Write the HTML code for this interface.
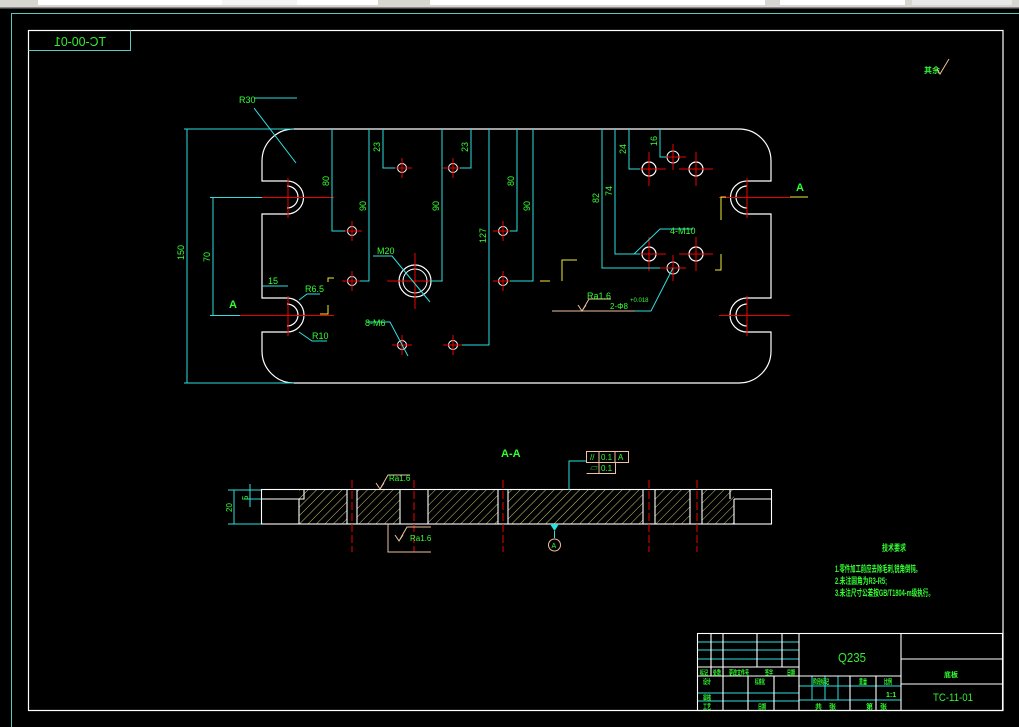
<!DOCTYPE html>
<html><head><meta charset="utf-8"><style>
html,body{margin:0;padding:0;background:#000;width:1019px;height:727px;overflow:hidden}
svg{display:block}
text{font-family:"Liberation Sans","Noto Sans CJK SC",sans-serif}
</style></head><body>
<svg width="1019" height="727" viewBox="0 0 1019 727" xmlns="http://www.w3.org/2000/svg">
<defs>
<pattern id="h" width="6" height="6" patternUnits="userSpaceOnUse" patternTransform="rotate(45)">
<line x1="0" y1="0" x2="0" y2="6" stroke="#e0e080" stroke-width="0.9"/>
</pattern>
<g id="sh"><circle r="4.5" fill="none" stroke="#fff" stroke-width="1"/><path d="M-10 0H10M0-10V10" stroke="#e00" stroke-width="1"/></g>
<g id="bh"><circle r="7" fill="none" stroke="#fff" stroke-width="1.2"/><path d="M-17 0H17M0-17V17" stroke="#e00" stroke-width="1"/></g>
</defs>
<rect x="0" y="0" width="1019" height="727" fill="#000"/>
<!-- toolbar -->
<rect x="0" y="0" width="1019" height="7" fill="#d8d6d0"/>
<rect x="38" y="0" width="340" height="5" fill="#fff"/>
<rect x="222" y="0" width="75" height="5" fill="#f4f4f4"/>
<rect x="430" y="0" width="180" height="5" fill="#fff"/>
<rect x="445" y="0" width="150" height="5" fill="#fff"/>
<rect x="605" y="0" width="160" height="5" fill="#fff"/>
<rect x="780" y="0" width="125" height="5" fill="#fff"/>
<rect x="912" y="0" width="100" height="5" fill="#e8e8e8"/>
<rect x="0" y="7" width="1019" height="1.5" fill="#888"/>
<!-- outer border -->
<path d="M11.5 727V13.5H1019" stroke="#5cc8c0" stroke-width="1" fill="none"/>
<rect x="28.5" y="30.5" width="974.5" height="680" fill="none" stroke="#fff" stroke-width="1.2"/>
<path d="M28.5 50.5H130.5V30.5" stroke="#5cc8c0" fill="none"/>
<text x="80" y="46" fill="#3e3" font-size="13" text-anchor="middle" transform="scale(-1,1) translate(-160,0)" textLength="52" lengthAdjust="spacingAndGlyphs">TC-00-01</text>

<!-- roughness top right -->
<text x="924" y="73" fill="#3e3" font-size="8" font-weight="bold">其余</text>
<path d="M937 69l3 5 3-5M940 74l9-15" stroke="#f0c0a0" fill="none"/>

<!-- plate outline -->
<g stroke="#fff" stroke-width="1.2" fill="none">
<path d="M294 129H739A32 32 0 0 1 771 161V181H747A16.5 16.5 0 0 0 747 214H771V298H747A16.5 16.5 0 0 0 747 332H771V351A32 32 0 0 1 739 383H294A32 32 0 0 1 262 351V332H287A16.5 16.5 0 0 0 287 298H262V214H287A16.5 16.5 0 0 0 287 181H262V161A32 32 0 0 1 294 129Z"/>
<path d="M287 186A11 11 0 0 1 287 208M287 304A11 11 0 0 1 287 326M747 186A11 11 0 0 0 747 208M747 304A11 11 0 0 0 747 326"/>
</g>
<g stroke="#e00" stroke-width="1">
<path d="M240 197.5H334M288 178V218M240 315.5H334M288 296V336M719 197.5H790M747 178V218M719 315.5H790M747 296V336"/>
</g>
<!-- holes -->
<use href="#sh" x="402" y="168"/><use href="#sh" x="453" y="168"/>
<use href="#sh" x="352" y="231"/><use href="#sh" x="352" y="281"/>
<use href="#sh" x="503" y="231"/><use href="#sh" x="503" y="281"/>
<use href="#sh" x="402" y="345"/><use href="#sh" x="453" y="345"/>
<use href="#bh" x="649" y="169"/><use href="#bh" x="696" y="169"/>
<use href="#bh" x="649" y="254"/><use href="#bh" x="696" y="254"/>
<g transform="translate(673,157)"><circle r="6" fill="none" stroke="#fff"/><path d="M-13 0H13M0-13V13" stroke="#e00"/></g>
<g transform="translate(673,268)"><circle r="6" fill="none" stroke="#fff"/><path d="M-13 0H13M0-13V13" stroke="#e00"/></g>
<g transform="translate(415,281)"><circle r="16" fill="none" stroke="#fff" stroke-width="1.2"/><circle r="12" fill="none" stroke="#fff"/><path d="M-28 0H28M0-28V28" stroke="#e00"/></g>

<!-- dimension lines -->
<g stroke="#2ee0e0" stroke-width="1" fill="none">
<path d="M184 129H294M184 383H294M187 129V383"/>
<path d="M210 197.5H262M210 315.5H240M213 197V315"/>
<path d="M262 286H288"/>
<path d="M332 129V231H345M369 129V281H360M383 129V168H395M442 129V281H430M471 129V168H460M489 129V345H462M517 129V231H510M533 129V281H510"/>
<path d="M602 129V268H660M615 129V254H640M629 129V169H640M660 129V157H666"/>
<path d="M254 108L296 163M297 98H254M373 256H392L430 302M367 322H390L408 356"/>
<path d="M634 254L660 229H693M636 268H616"/>
<path d="M299 300L307 294H320M299 332L312 341H327"/>
<path d="M673 268L651 311H620"/>
</g>
<path d="M552 311H635M578 305l4 6 4-6M582 311l7-12h22" stroke="#f0c0a0" fill="none"/>
<g stroke="#ee3" fill="none"><path d="M328 282V278H334M328 305V314H320M562 281V260H577M550 281H540M721 220V197H726M721 254V270H715M790 197H808"/></g>
<g fill="#3f3" font-size="9">
<text x="239" y="103">R30</text>
<text x="268" y="284">15</text>
<text x="305" y="292">R6.5</text>
<text x="312" y="339">R10</text>
<text x="377" y="254">M20</text>
<text x="365" y="326">8-M6</text>
<text x="670" y="234">4-M10</text>
<text x="587" y="299">Ra1.6</text>
<text x="610" y="309" font-size="8">2-Φ8</text><text x="630" y="302" font-size="6">+0.018</text>
<text x="229" y="308" font-size="11" font-weight="bold">A</text>
<text x="796" y="191" font-size="11" font-weight="bold">A</text>
<g font-size="9">
<text transform="translate(184,260) rotate(-90)">150</text>
<text transform="translate(210,262) rotate(-90)">70</text>
<text transform="translate(329,186) rotate(-90)">80</text>
<text transform="translate(366,211) rotate(-90)">90</text>
<text transform="translate(380,152) rotate(-90)">23</text>
<text transform="translate(439,211) rotate(-90)">90</text>
<text transform="translate(468,152) rotate(-90)">23</text>
<text transform="translate(486,243) rotate(-90)">127</text>
<text transform="translate(514,186) rotate(-90)">80</text>
<text transform="translate(530,211) rotate(-90)">90</text>
<text transform="translate(599,203) rotate(-90)">82</text>
<text transform="translate(612,196) rotate(-90)">74</text>
<text transform="translate(626,154) rotate(-90)">24</text>
<text transform="translate(657,146) rotate(-90)">16</text>
</g></g>

<!-- section A-A -->
<text x="501" y="457" fill="#3f3" font-size="11" font-weight="bold">A-A</text>
<g>
<rect x="299" y="490" width="435" height="34" fill="url(#h)"/>
<rect x="261" y="490" width="38" height="34" fill="#000"/>
<rect x="734" y="490" width="38" height="34" fill="#000"/>
<rect x="347" y="490" width="10" height="34" fill="#000"/>
<rect x="400" y="490" width="28" height="34" fill="#000"/>
<rect x="498" y="490" width="10" height="34" fill="#000"/>
<rect x="643" y="490" width="12" height="34" fill="#000"/>
<rect x="690" y="490" width="12" height="34" fill="#000"/>
</g>
<g stroke="#fff" stroke-width="1.1" fill="none">
<rect x="261.5" y="489.5" width="510" height="34.5"/>
<path d="M261 499H304V490M299 499V524M734 499H772M730 490V499M734 499V524"/>
<path d="M347 490V524M357 490V524M400 490V524M428 490V524M498 490V524M508 490V524M643 490V524M655 490V524M690 490V524M702 490V524"/>
</g>
<g stroke="#e00" stroke-dasharray="8,3"><path d="M352 480V552M414 480V552M503 480V552M649 480V552M697 480V552"/></g>
<g stroke="#2ee0e0" fill="none"><path d="M228 490H261M228 524H261M234 490V524M250 484V507M244 499H261M569 490V461H586"/></g>
<path d="M550 524h9l-4.5 7z" fill="#2ee0e0"/><path d="M554.5 531V538" stroke="#2ee0e0"/>
<circle cx="554.5" cy="545" r="6" fill="none" stroke="#f0c0a0"/>
<text x="551.5" y="548" fill="#3f3" font-size="7">A</text>
<g stroke="#f0c0a0" fill="none"><rect x="586.5" y="451.5" width="42" height="11"/><path d="M586.5 473.5H615.5V462M599 451V474M615 451V463"/>
<path d="M376 483l4 6 4-6M380 489l8-14h22M388 524V552H431M395 535l4 6 4-6M399 541l8-14h24"/></g>
<g fill="#3f3" font-size="8">
<text x="590" y="460">//</text><text x="601" y="460">0.1</text><text x="618" y="460">A</text>
<text x="590" y="471">▱</text><text x="601" y="471">0.1</text>
<text x="389" y="481">Ra1.6</text><text x="410" y="541">Ra1.6</text>
<text transform="translate(248,500) rotate(-90)">5</text>
<text transform="translate(232,512) rotate(-90)">20</text>
</g>

<!-- technical notes -->
<g fill="#3f3" font-size="9" font-weight="bold">
<text x="882" y="551" textLength="24" lengthAdjust="spacingAndGlyphs">技术要求</text>
<text x="835" y="572" textLength="86" lengthAdjust="spacingAndGlyphs">1.零件加工前应去除毛刺,锐角倒钝。</text>
<text x="835" y="584" textLength="52" lengthAdjust="spacingAndGlyphs">2.未注圆角为R3-R5;</text>
<text x="835" y="596" textLength="99" lengthAdjust="spacingAndGlyphs">3.未注尺寸公差按GB/T1804-m级执行。</text>
</g>

<!-- title block -->
<g stroke="#2ee0e0" stroke-width="1">
<path d="M697 642H799M697 650H799M697 659H799M697 693H799M697 701H799M799 686H901M799 700H901M812 676V700M825 676V700M838 676V700"/>
</g>
<g stroke="#fff" stroke-width="1.1" fill="none">
<rect x="697.5" y="633.5" width="305" height="77"/>
<path d="M799 633V711M901 633V711M901 659H1003M901 684H1003M697 667H799M697 676H901"/>
<path d="M711 633V676M723 633V711M757 633V667M782 633V667M748 676V711M774 676V711M850 676V711M876 676V711"/>
</g>
<text x="838" y="662" fill="#3e3" font-size="13" textLength="28" lengthAdjust="spacingAndGlyphs">Q235</text>
<text x="933" y="701" fill="#3e3" font-size="11" textLength="40" lengthAdjust="spacingAndGlyphs">TC-11-01</text>
<g fill="#3f3" font-size="7" font-weight="bold">
<text x="944" y="677">底板</text>
<text x="700" y="675" textLength="8" lengthAdjust="spacingAndGlyphs">标记</text><text x="713" y="675" textLength="8" lengthAdjust="spacingAndGlyphs">处数</text><text x="729" y="675" textLength="20" lengthAdjust="spacingAndGlyphs">更改文件号</text><text x="765" y="675" textLength="8" lengthAdjust="spacingAndGlyphs">签字</text><text x="787" y="675" textLength="8" lengthAdjust="spacingAndGlyphs">日期</text>
<text x="703" y="684" textLength="8" lengthAdjust="spacingAndGlyphs">设计</text><text x="755" y="684" textLength="10" lengthAdjust="spacingAndGlyphs">标准化</text>
<text x="703" y="700" textLength="8" lengthAdjust="spacingAndGlyphs">审核</text><text x="703" y="709" textLength="8" lengthAdjust="spacingAndGlyphs">工艺</text><text x="758" y="709" textLength="8" lengthAdjust="spacingAndGlyphs">日期</text>
<text x="813" y="684" textLength="16" lengthAdjust="spacingAndGlyphs">阶段标记</text><text x="859" y="684" textLength="8" lengthAdjust="spacingAndGlyphs">重量</text><text x="884" y="684" textLength="8" lengthAdjust="spacingAndGlyphs">比例</text>
<text x="886" y="697">1:1</text>
<text x="815" y="709">共</text><text x="829" y="709">张</text><text x="866" y="709">第</text><text x="880" y="709">张</text>
</g>
</svg>
</body></html>
